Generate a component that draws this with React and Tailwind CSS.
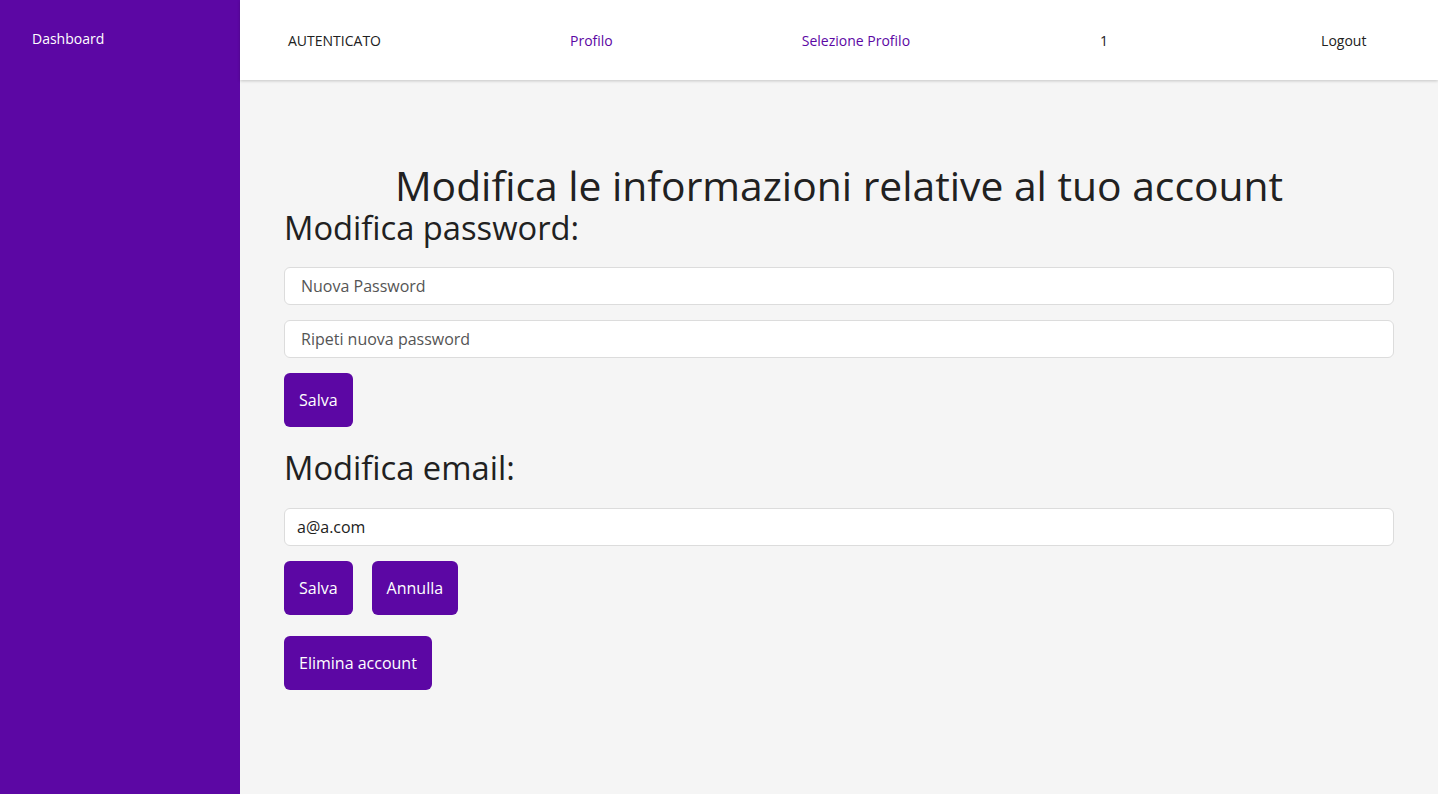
import React from 'react';

export default function App() {
  return (
    <div className="flex min-h-[794px] w-full font-['Open_Sans',sans-serif] text-[#212121]">
      {/* Sidebar */}
      <aside className="w-[240px] shrink-0 bg-[#5c07a4] text-white">
        <div className="pl-[32px] pt-[29px] text-[14px] leading-[20px]">Dashboard</div>
      </aside>

      <div className="flex flex-1 flex-col bg-[#f5f5f5]">
        {/* Header */}
        <header className="flex h-[80px] items-center bg-white pl-[48px] text-[14px] shadow-[0_1px_3px_rgba(0,0,0,0.2)]">
          <span>AUTENTICATO</span>
          <a className="ml-[189px] text-[#5c07a4]">Profilo</a>
          <a className="ml-[189px] text-[#5c07a4]">Selezione Profilo</a>
          <span className="ml-[190px]">1</span>
          <span className="ml-[213px]">Logout</span>
        </header>

        {/* Content */}
        <main className="px-[44px] pt-[81px]">
          <h1 className="text-center text-[40.8px] leading-[48px]">Modifica le informazioni relative al tuo account</h1>
          <h2 className="text-[32.7px] leading-[38px]">Modifica password:</h2>
          <div className="mt-[20px] flex flex-col gap-[15px]">
            <input
              type="password"
              placeholder="Nuova Password"
              className="h-[38px] w-full rounded-[6px] border border-[#dcdcdc] bg-white px-[16px] text-[16px] outline-none placeholder:text-[#555]"
            />
            <input
              type="password"
              placeholder="Ripeti nuova password"
              className="h-[38px] w-full rounded-[6px] border border-[#dcdcdc] bg-white px-[16px] text-[16px] outline-none placeholder:text-[#555]"
            />
            <div>
              <button className="h-[54px] rounded-[6px] bg-[#5c07a4] px-[15px] text-[16px] text-white">Salva</button>
            </div>
          </div>

          <h2 className="mt-[22px] text-[32.7px] leading-[38px]">Modifica email:</h2>
          <input
            type="text"
            defaultValue="a@a.com"
            className="mt-[21px] h-[38px] w-full rounded-[6px] border border-[#dcdcdc] bg-white px-[12px] text-[16px] text-[#212121] outline-none"
          />
          <div className="mt-[15px] flex gap-[19px]">
            <button className="h-[54px] rounded-[6px] bg-[#5c07a4] px-[15px] text-[16px] text-white">Salva</button>
            <button className="h-[54px] rounded-[6px] bg-[#5c07a4] px-[15px] text-[16px] text-white">Annulla</button>
          </div>
          <div className="mt-[21px]">
            <button className="h-[54px] rounded-[6px] bg-[#5c07a4] px-[15px] text-[16px] text-white">Elimina account</button>
          </div>
        </main>
      </div>
    </div>
  );
}
